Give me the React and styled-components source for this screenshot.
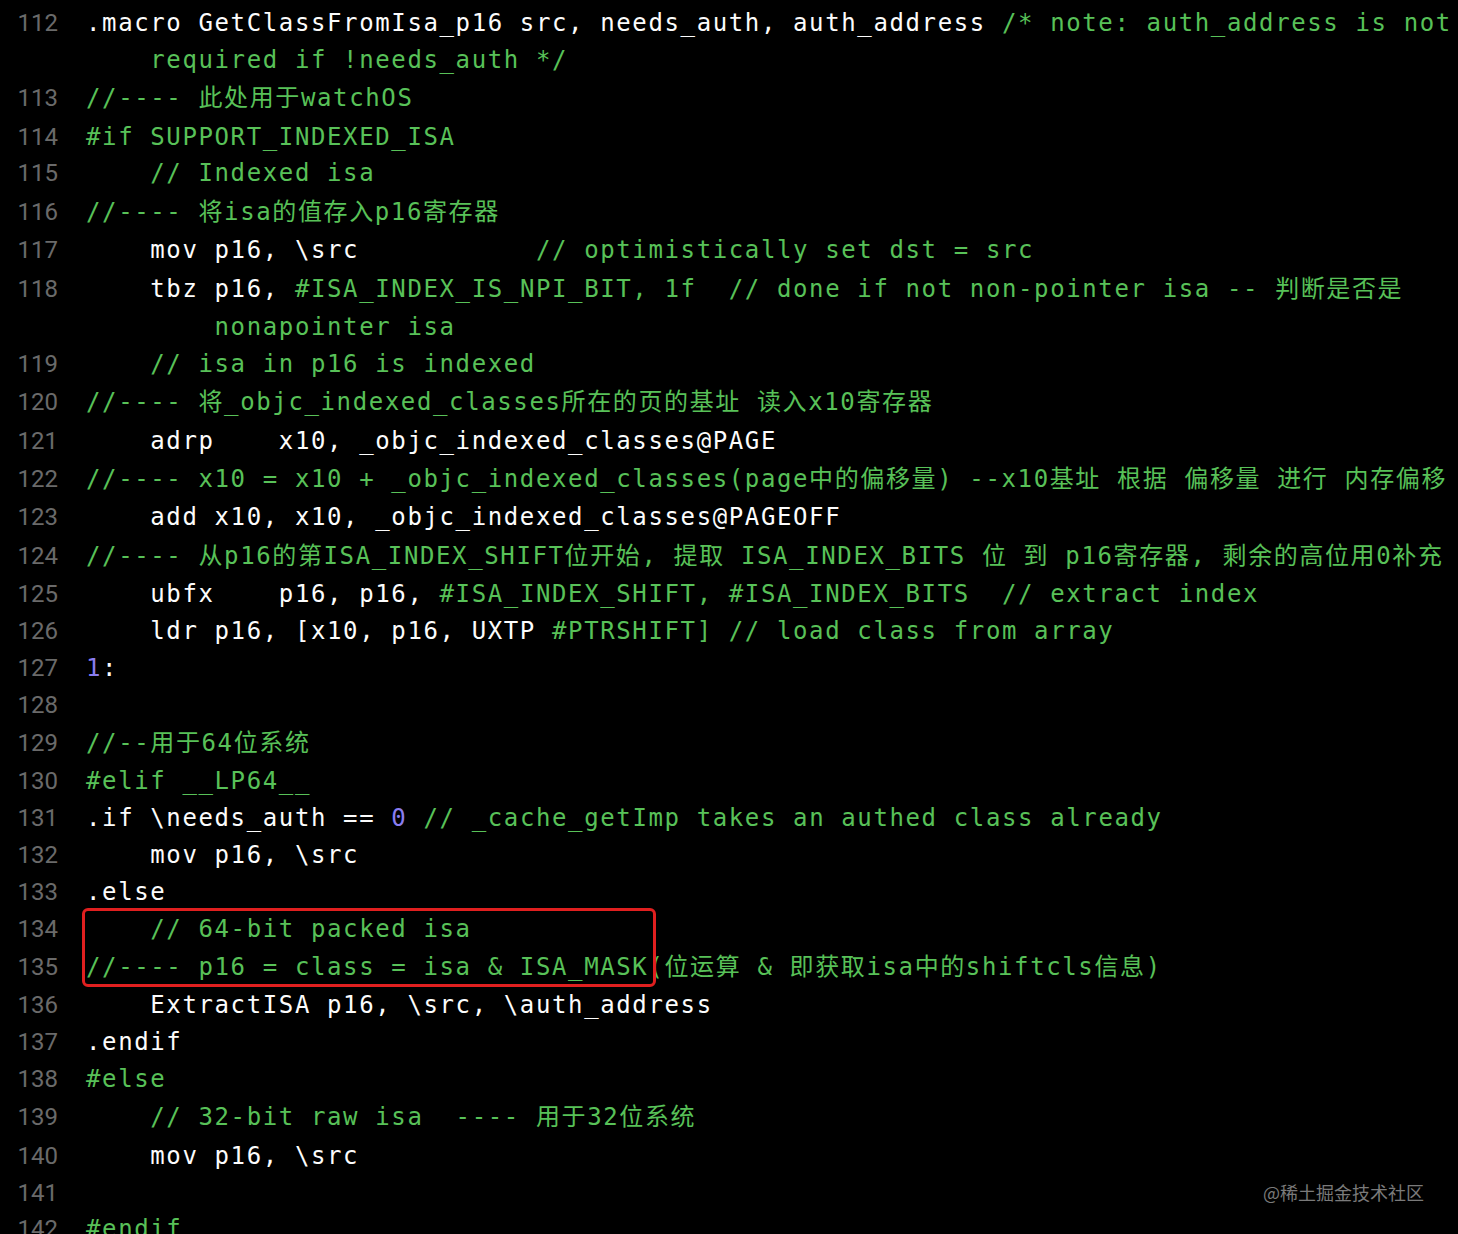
import styled, { createGlobalStyle } from "styled-components";

const GlobalStyle = createGlobalStyle`
  html, body {
    margin: 0;
    padding: 0;
    background: #000;
  }
  #root {
    height: 1234px;
    overflow: hidden;
  }
`;

const Page = styled.div`
  position: relative;
  height: 1234px;
  overflow: hidden;
  background: #000;
`;

const Editor = styled.div`
  display: flex;
  flex-direction: column;
  padding-top: 4.6px;
`;

const Row = styled.div`
  display: flex;
  align-items: center;
  height: ${(p) => (p.$tall ? 40 : 36.8)}px;
`;

const LineNo = styled.div`
  flex: 0 0 58px;
  text-align: right;
  font-family: Roboto, "Liberation Sans", sans-serif;
  font-size: 24px;
  color: #6a6a6a;
  line-height: 1;
`;

const Code = styled.div`
  margin-left: 28px;
  white-space: pre;
  font-family: "DejaVu Sans Mono", "Noto Sans CJK SC", monospace;
  font-size: 24px;
  letter-spacing: 1.62px;
  line-height: 1;
  color: #fcfcfc;
`;

const colors = {
  plain: "#fcfcfc",
  green: "#58c158",
  num: "#8a7df0",
};

const Tok = styled.span`
  color: ${(p) => colors[p.$kind]};
`;

const Highlight = styled.div`
  position: absolute;
  left: 82px;
  top: 908px;
  width: 568px;
  height: 73px;
  border: 3px solid #e01f1f;
  border-radius: 6px;
`;

const Watermark = styled.div`
  position: absolute;
  right: 34px;
  top: 1179px;
  font-family: "Noto Sans CJK SC", sans-serif;
  font-size: 18px;
  color: #7a7a7a;
`;

const P = (t) => ["plain", t];
const G = (t) => ["green", t];
const N = (t) => ["num", t];

// n: line number (null for wrapped rows), tall: row has CJK text
const lines = [
  { n: 112, parts: [P(".macro GetClassFromIsa_p16 src, needs_auth, auth_address "), G("/* note: auth_address is not")] },
  { n: null, parts: [G("    required if !needs_auth */")] },
  { n: 113, tall: true, parts: [G("//---- 此处用于watchOS")] },
  { n: 114, parts: [G("#if SUPPORT_INDEXED_ISA")] },
  { n: 115, parts: [G("    // Indexed isa")] },
  { n: 116, tall: true, parts: [G("//---- 将isa的值存入p16寄存器")] },
  { n: 117, parts: [P("    mov p16, \\src           "), G("// optimistically set dst = src")] },
  { n: 118, tall: true, parts: [P("    tbz p16, "), G("#ISA_INDEX_IS_NPI_BIT, 1f  // done if not non-pointer isa -- 判断是否是")] },
  { n: null, parts: [G("        nonapointer isa")] },
  { n: 119, parts: [G("    // isa in p16 is indexed")] },
  { n: 120, tall: true, parts: [G("//---- 将_objc_indexed_classes所在的页的基址 读入x10寄存器")] },
  { n: 121, parts: [P("    adrp    x10, _objc_indexed_classes@PAGE")] },
  { n: 122, tall: true, parts: [G("//---- x10 = x10 + _objc_indexed_classes(page中的偏移量) --x10基址 根据 偏移量 进行 内存偏移")] },
  { n: 123, parts: [P("    add x10, x10, _objc_indexed_classes@PAGEOFF")] },
  { n: 124, tall: true, parts: [G("//---- 从p16的第ISA_INDEX_SHIFT位开始, 提取 ISA_INDEX_BITS 位 到 p16寄存器, 剩余的高位用0补充")] },
  { n: 125, parts: [P("    ubfx    p16, p16, "), G("#ISA_INDEX_SHIFT, #ISA_INDEX_BITS  // extract index")] },
  { n: 126, parts: [P("    ldr p16, [x10, p16, UXTP "), G("#PTRSHIFT] // load class from array")] },
  { n: 127, parts: [N("1"), P(":")] },
  { n: 128, parts: [] },
  { n: 129, tall: true, parts: [G("//--用于64位系统")] },
  { n: 130, parts: [G("#elif __LP64__")] },
  { n: 131, parts: [P(".if \\needs_auth == "), N("0"), G(" // _cache_getImp takes an authed class already")] },
  { n: 132, parts: [P("    mov p16, \\src")] },
  { n: 133, parts: [P(".else")] },
  { n: 134, parts: [G("    // 64-bit packed isa")] },
  { n: 135, tall: true, parts: [G("//---- p16 = class = isa & ISA_MASK(位运算 & 即获取isa中的shiftcls信息)")] },
  { n: 136, parts: [P("    ExtractISA p16, \\src, \\auth_address")] },
  { n: 137, parts: [P(".endif")] },
  { n: 138, parts: [G("#else")] },
  { n: 139, tall: true, parts: [G("    // 32-bit raw isa  ---- 用于32位系统")] },
  { n: 140, parts: [P("    mov p16, \\src")] },
  { n: 141, parts: [] },
  { n: 142, parts: [G("#endif")] },
];

export default function App() {
  return (
    <Page>
      <GlobalStyle />
      <Editor>
        {lines.map((line, i) => (
          <Row key={i} $tall={line.tall}>
            <LineNo>{line.n ?? ""}</LineNo>
            <Code>
              {line.parts.map(([kind, text], j) => (
                <Tok key={j} $kind={kind}>
                  {text}
                </Tok>
              ))}
              {line.parts.length === 0 ? " " : null}
            </Code>
          </Row>
        ))}
      </Editor>
      <Highlight />
      <Watermark>@稀土掘金技术社区</Watermark>
    </Page>
  );
}
